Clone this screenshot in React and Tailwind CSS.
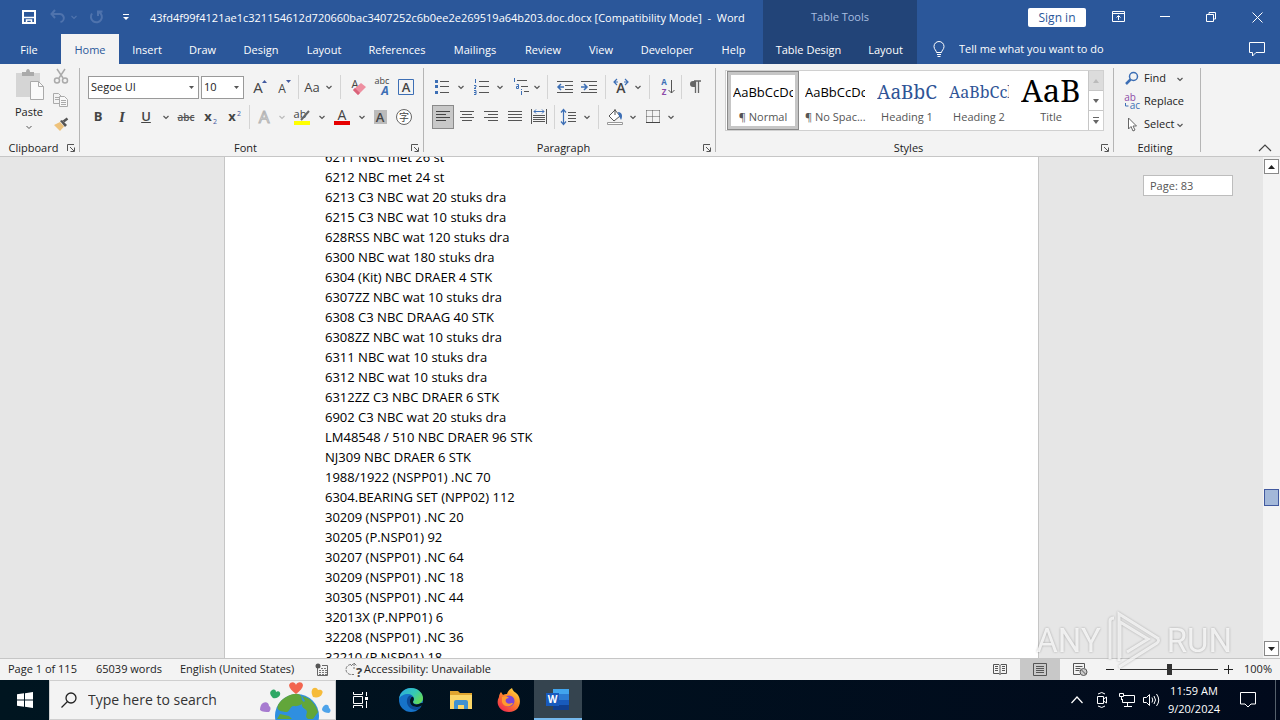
import React from "react";

const Svg = ({ w = 20, h = 20, children, className = "" }) => (
  <svg width={w} height={h} viewBox={`0 0 ${w} ${h}`} fill="none" aria-hidden="true" className={`shrink-0 overflow-visible ${className}`}>
    {children}
  </svg>
);

const IconButton = ({ label, width = "w-6", className = "", children }) => (
  <button type="button" aria-label={label} className={`flex h-6 shrink-0 items-center justify-center ${width} ${className}`}>
    {children}
  </button>
);

const Chevron = ({ label, width = "w-3", color = "#555" }) => (
  <IconButton label={label} width={width}>
    <Svg w={8} h={8}><path d="M1.500 3 4 5.500 6.500 3" stroke={color} strokeWidth="1.200" /></Svg>
  </IconButton>
);

const Sep = ({ width = "w-2" }) => (
  <span className={`flex h-6 shrink-0 justify-center ${width}`}><span className="h-full w-px bg-[#d4d4d4]" /></span>
);

const Lines = ({ rows, color = "#555" }) => (
  <>{rows.map(([x1, x2, y]) => <path key={y} d={`M${x1} ${y}.5H${x2}`} stroke={color} />)}</>
);

const Group = ({ name, width, launcher = true, children }) => (
  <section aria-label={name} className={`flex shrink-0 flex-col ${width}`}>
    <div className="flex flex-1">
      <div className="flex min-w-0 flex-1 flex-col">
        <div className="flex-1">{children}</div>
        <div className="flex h-4 items-center pr-1">
          <span className="flex-1 text-center">{name}</span>
          {launcher && (
            <button type="button" aria-label={`${name} settings`}>
              <Svg w={8} h={8}>
                <path d="M.5 7V.5H7M3 3l4 4M7.500 3.500v4h-4" stroke="#555" />
              </Svg>
            </button>
          )}
        </div>
      </div>
      <span className="mt-1 mb-1 w-px bg-[#b5b5b5]" />
    </div>
  </section>
);

const TABS = [
  ["File", "w-[58px] mr-[3px]"], ["Home", "w-[58px]"], ["Insert", "w-14"], ["Draw", "w-[55px]"], ["Design", "w-[62px]"],
  ["Layout", "w-16"], ["References", "w-[82px]"], ["Mailings", "w-[74px]"], ["Review", "w-[62px]"],
  ["View", "w-[54px]"], ["Developer", "w-[78px]"], ["Help", "w-[55px]"],
];

const Header = () => (
  <header className="flex h-16 shrink-0 bg-[#2b579a] text-[11px] text-white">
    <div className="flex w-[763px] shrink-0 flex-col">
      <div className="flex h-[34px] items-center">
        <button type="button" aria-label="Save" className="ml-[22px]">
          <Svg w={14} h={14}><path d="M1 1h12v12H1z" stroke="#fff" strokeWidth="2" /><path d="M2 7.500h10M4.500 13v-3h5v3" stroke="#fff" strokeWidth="1.500" /></Svg>
        </button>
        <button type="button" aria-label="Undo" className="ml-[14px]">
          <Svg w={16} h={16}><path d="M5 1 1.500 5 5 9M2 5h7a4 4 0 0 1 1.500 8" stroke="#4f73ad" strokeWidth="2" /></Svg>
        </button>
        <Chevron label="Undo history" width="w-4" color="#4f73ad" />
        <button type="button" aria-label="Repeat" className="ml-1.5">
          <Svg w={16} h={16}><path d="M4 4.500A5.500 5.500 0 1 0 11 3M10 7V2.500h4.500" stroke="#4f73ad" strokeWidth="2" /></Svg>
        </button>
        <button type="button" aria-label="Customize Quick Access Toolbar" className="ml-[18px]">
          <Svg w={8} h={8}><path d="M1 1.500h6" stroke="#fff" /><path d="M1 4h6L4 7z" fill="#fff" /></Svg>
        </button>
        <h1 className="ml-5 pt-0.5 whitespace-pre">43fd4f99f4121ae1c321154612d720660bac3407252c6b0ee2e269519a64b203.doc.docx [Compatibility Mode]  -  Word</h1>
      </div>
      <nav aria-label="Ribbon tabs" className="flex h-[30px]">
        {TABS.map(([t, w]) => (
          <button key={t} type="button" className={`pt-0.5 text-center ${w} ${t === "Home" ? "bg-[#f3f3f3] text-[#2b579a]" : ""}`}>{t}</button>
        ))}
      </nav>
    </div>
    <div className="flex w-[154px] shrink-0 flex-col bg-[#224478]">
      <div className="flex h-[34px] items-center justify-center text-[#a9bfe0]">Table Tools</div>
      <div className="flex h-[30px]">
        <button type="button" className="w-[91px] pt-0.5">Table Design</button>
        <button type="button" className="flex-1 pt-0.5">Layout</button>
      </div>
    </div>
    <div className="flex flex-1 flex-col">
      <div className="flex h-[34px] items-center justify-end pr-[17px]">
        <button type="button" className="mr-[26px] h-[19px] w-[58px] rounded-xs bg-white text-xs leading-[19px] text-[#2b579a]">Sign in</button>
        <button type="button" aria-label="Ribbon display options" className="mr-[34px]">
          <Svg w={14} h={12}><path d="M.5.5h12v10H.5zM.5 2.500h12M6.500 9V5M4.500 6.500l2-2 2 2" stroke="#fff" /></Svg>
        </button>
        <button type="button" aria-label="Minimize" className="mr-9"><Svg w={10} h={10}><path d="M0 4.500h10" stroke="#fff" /></Svg></button>
        <button type="button" aria-label="Restore" className="mr-9"><Svg w={10} h={10}><path d="M.5 2.500h7v7h-7zM3 2V.5h6.500V7H8" stroke="#fff" /></Svg></button>
        <button type="button" aria-label="Close"><Svg w={11} h={11}><path d="m.5.5 10 10M10.500.5l-10 10" stroke="#fff" /></Svg></button>
      </div>
      <div className="flex h-[30px] items-center pr-[15px]">
        <label htmlFor="tellme" className="ml-4" aria-label="Tell me">
          <Svg w={12} h={16}><path d="M3.500 11.500c0-2-2.500-3-2.500-6a5 5 0 0 1 10 0c0 3-2.500 4-2.500 6zM4 13.500h4M4.500 15.500h3" stroke="#fff" /></Svg>
        </label>
        <input id="tellme" placeholder="Tell me what you want to do" className="ml-3.5 min-w-0 flex-1 bg-transparent outline-none placeholder:text-white" />
        <button type="button" aria-label="Comments"><Svg w={16} h={15}><path d="M.5.5h15v10H7L3.500 14v-3.500h-3z" stroke="#fff" /></Svg></button>
      </div>
    </div>
  </header>
);

const Combo = ({ label, value, width }) => (
  <div className={`relative h-[23px] border border-[#999] bg-white ${width}`}>
    <select aria-label={label} className="h-full w-full appearance-none bg-transparent pl-0.5 text-[11px] text-[#222] outline-none"><option>{value}</option></select>
    <Svg w={5} h={3} className="pointer-events-none absolute top-[9px] right-1"><path d="M0 0h5L2.500 3z" fill="#555" /></Svg>
  </div>
);

const Glyph = ({ x = 10, y = 15, size = 14, fill = "#444", weight = 400, anchor = "middle", italic, children }) => (
  <text x={x} y={y} fontSize={size} fill={fill} fontWeight={weight} textAnchor={anchor} fontStyle={italic ? "italic" : "normal"} fontFamily="'Open Sans', 'Noto Sans CJK SC', sans-serif">{children}</text>
);

const Clipboard = () => (
  <Group name="Clipboard" width="w-20">
    <div className="flex pt-1">
      <button type="button" className="ml-2 flex w-[42px] flex-col items-center">
        <Svg w={30} h={32}>
          <path d="M2 5h24v24H2z" fill="#d5d5d5" /><path d="M8 8V4h4c0-4 4-4 4 0h4v4z" fill="#aaa" />
          <path d="M16.500 13.500h8l5 5v13h-13z" fill="#fafafa" stroke="#aaa" /><path d="M24.500 13.500v5h5" stroke="#aaa" />
        </Svg>
        <span className="mt-1 leading-4">Paste</span>
        <Svg w={8} h={8} className="mt-1"><path d="M1.500 2 4 4.500 6.500 2" stroke="#555" /></Svg>
      </button>
      <div className="flex w-[22px] flex-col items-center">
        <IconButton label="Cut" className="-mt-1"><Svg w={16} h={16}><path d="m4 1 6 9M12 1 6 10" stroke="#aaa" strokeWidth="1.500" /><circle cx="4" cy="12.500" r="2.500" stroke="#aaa" strokeWidth="1.500" /><circle cx="12" cy="12.500" r="2.500" stroke="#aaa" strokeWidth="1.500" /></Svg></IconButton>
        <IconButton label="Copy"><Svg w={16} h={14}><path d="M.5.5h5l3 3v7h-8zM2 4.500h4M2 6.500h4" stroke="#aaa" /><path d="M6.500 3.500h5l3 3v7h-8z" fill="#f8f8f8" stroke="#aaa" /><path d="M8 7.500h5M8 9.500h5M8 11.500h5" stroke="#aaa" /></Svg></IconButton>
        <IconButton label="Format painter"><Svg w={16} h={15}><path d="M1 8 7 5l4 4.500L7 14z" fill="#eec27b" /><path d="m7 4 2-1 5 5-2 2z" fill="#555" /><path d="m10.500 4.500 4-3" stroke="#555" strokeWidth="2.500" /></Svg></IconButton>
      </div>
    </div>
  </Group>
);

const FontGroup = () => (
  <Group name="Font" width="w-[344px]">
    <div className="flex flex-col gap-[6px] pt-[11px]">
      <div className="flex h-6 items-center pl-2">
        <Combo label="Font name" value="Segoe UI" width="w-[111px]" />
        <span className="w-0.5" />
        <Combo label="Font size" value="10" width="w-[43px]" />
        <span className="w-1" />
        <IconButton label="Increase font size"><Svg><Glyph x={8} y={16} size={15}>A</Glyph><path d="m12 6 2.500-3L17 6z" fill="#41599f" /></Svg></IconButton>
        <IconButton label="Decrease font size"><Svg><Glyph x={8} y={16} size={12}>A</Glyph><path d="m12 3 2.500 3L17 3z" fill="#41599f" /></Svg></IconButton>
        <Sep width="w-1" />
        <IconButton label="Change case"><Svg><Glyph size={13}>Aa</Glyph></Svg></IconButton>
        <Chevron label="Case options" width="w-2.5" />
        <Sep width="w-3" />
        <IconButton label="Clear formatting"><Svg><Glyph x={7} y={11} size={11}>A</Glyph><path d="m5 13 8-7 5 4-8 8z" fill="#ee8fa0" /><path d="m5 13 2-2 5 5-2 2z" fill="#d9637a" /></Svg></IconButton>
        <IconButton label="Phonetic guide"><Svg><Glyph y={7} size={9}>abc</Glyph><Glyph x={13} y={18} size={12} fill="#3d6fb5" weight={700} italic>A</Glyph></Svg></IconButton>
        <IconButton label="Character border"><Svg><path d="M2.500 2.500h15v15h-15z" stroke="#3d6fb5" /><Glyph size={13} weight={600}>A</Glyph></Svg></IconButton>
      </div>
      <div className="flex h-6 items-center pl-1.5">
        <IconButton label="Bold"><b className="text-[13px] text-[#444]">B</b></IconButton>
        <IconButton label="Italic"><i className="font-['Liberation_Serif'] text-[15px] font-bold text-[#444]">I</i></IconButton>
        <IconButton label="Underline"><u className="text-[13px] font-semibold text-[#444]">U</u></IconButton>
        <Chevron label="Underline options" width="w-4" />
        <IconButton label="Strikethrough"><s className="text-[10px] font-semibold text-[#555]">abc</s></IconButton>
        <IconButton label="Subscript"><Svg><Glyph x={8} y={14} weight={700} size={13}>x</Glyph><Glyph x={15} y={17} size={7} fill="#41599f">2</Glyph></Svg></IconButton>
        <IconButton label="Superscript"><Svg><Glyph x={8} y={14} weight={700} size={13}>x</Glyph><Glyph x={15} y={9} size={7} fill="#41599f">2</Glyph></Svg></IconButton>
        <Sep width="w-1.5" />
        <IconButton label="Text effects"><Svg><text x="10" y="16" textAnchor="middle" fontSize="17" fontFamily="Open Sans" fill="#f3f3f3" stroke="#b5b5b5">A</text></Svg></IconButton>
        <Chevron label="Text effect options" color="#bbb" />
        <IconButton label="Highlight" width="w-7"><Svg><Glyph x={8} y={11} size={11}>ab</Glyph><path d="m9 13 8-9" stroke="#666" strokeWidth="2" /><path d="M2 14h16v4H2z" fill="#ffff00" /></Svg></IconButton>
        <Chevron label="Highlight options" />
        <IconButton label="Font color" width="w-7"><Svg><Glyph y={13} size={14}>A</Glyph><path d="M2 14h16v4H2z" fill="#e60000" /></Svg></IconButton>
        <Chevron label="Font color options" />
        <IconButton label="Character shading"><Svg><path d="M4 3h13v14H4z" fill="#bbb" /><Glyph size={13} weight={600}>A</Glyph></Svg></IconButton>
        <IconButton label="Enclose characters"><Svg><circle cx="10" cy="10" r="7.500" fill="#fff" stroke="#666" /><Glyph y={14} size={10}>字</Glyph></Svg></IconButton>
      </div>
    </div>
  </Group>
);

const ParagraphGroup = () => (
  <Group name="Paragraph" width="w-[292px]">
    <div className="flex flex-col gap-[6px] pt-[11px]">
      <div className="flex h-6 items-center pl-[7px]">
        <IconButton label="Bullets"><Svg><Lines rows={[[7, 16, 4], [7, 16, 9], [7, 16, 15]]} /><path d="M2 3h3v3H2zM2 8h3v3H2zM2 14h3v3H2z" fill="#3d6fb5" /></Svg></IconButton>
        <Chevron label="Bullet options" />
        <span className="w-[3px]" />
        <IconButton label="Numbering"><Svg><Lines rows={[[7, 17, 4], [7, 17, 9], [7, 17, 15]]} /><path d="M3.500 2v4M2 8.500h2v1.500l-2 1.500h2M2 13.500h2v4H2m0-2h2" stroke="#3d6fb5" /></Svg></IconButton>
        <Chevron label="Numbering options" />
        <span className="w-[3px]" />
        <IconButton label="Multilevel list"><Svg><Lines rows={[[6, 16, 3], [10, 17, 9], [13, 18, 14]]} /><path d="M3.500 1v4M5.500 7.500h2v4h-2v-2h2M10.500 12v1M10.500 14v4" stroke="#3d6fb5" /></Svg></IconButton>
        <Chevron label="Multilevel options" width="w-2" />
        <Sep width="w-3" />
        <IconButton label="Decrease indent"><Svg><Lines rows={[[2, 18, 4], [10, 18, 8], [10, 18, 12], [2, 18, 15]]} /><path d="M9 10H3m3-3-3 3 3 3" stroke="#3d6fb5" strokeWidth="1.500" /></Svg></IconButton>
        <IconButton label="Increase indent"><Svg><Lines rows={[[2, 18, 4], [10, 18, 8], [10, 18, 12], [2, 18, 15]]} /><path d="M2 10h6M5 7l3 3-3 3" stroke="#3d6fb5" strokeWidth="1.500" /></Svg></IconButton>
        <Sep />
        <IconButton label="Asian layout"><Svg><Glyph y={16} size={14} weight={600}>A</Glyph><path d="m6 2-3 3 3 3M3 5h4M14 2l3 3-3 3M17 5h-4" stroke="#3d6fb5" strokeWidth="1.200" /></Svg></IconButton>
        <Chevron label="Asian layout options" width="w-2.5" />
        <Sep width="w-3" />
        <IconButton label="Sort"><Svg><Glyph x={7} y={8} size={8} fill="#3d6fb5" weight={700}>A</Glyph><Glyph x={7} y={18} size={8} fill="#8d4ba8" weight={700}>Z</Glyph><path d="M14.500 3v13m-3-3 3 3 3-3" stroke="#555" /></Svg></IconButton>
        <Sep width="w-1" />
        <IconButton label="Show marks"><Svg><path d="M10 4H8a3 3 0 0 0 0 6h2z" fill="#666" /><path d="M9 4h7M10.500 4v12M13.500 4v12" stroke="#666" strokeWidth="1.300" /></Svg></IconButton>
      </div>
      <div className="flex h-6 items-center pl-2">
        <IconButton label="Align left" width="w-[22px] mr-px" className="border border-[#8a8a8a] bg-[#c8c8c8]"><Svg><Lines rows={[[3, 17, 4], [3, 13, 7], [3, 17, 10], [3, 13, 13]]} color="#444" /></Svg></IconButton>
        <IconButton label="Center"><Svg><Lines rows={[[3, 17, 4], [5, 15, 7], [3, 17, 10], [5, 15, 13]]} /></Svg></IconButton>
        <IconButton label="Align right"><Svg><Lines rows={[[3, 17, 4], [7, 17, 7], [3, 17, 10], [7, 17, 13]]} /></Svg></IconButton>
        <IconButton label="Justify"><Svg><Lines rows={[[3, 17, 4], [3, 17, 7], [3, 17, 10], [3, 17, 13]]} /></Svg></IconButton>
        <IconButton label="Distributed"><Svg><path d="M2.500 2v15M17.500 2v15M4 8.500h12M4 10.500h12M4 12.500h12M4 14.500h12" stroke="#555" /><path d="M5 4.500h10M7 2.500l-2 2 2 2M13 2.500l2 2-2 2" stroke="#3d6fb5" /></Svg></IconButton>
        <Sep width="w-1.5" />
        <IconButton label="Line spacing"><Svg><Lines rows={[[9, 17, 5], [9, 17, 8], [9, 17, 11], [9, 17, 14]]} /><path d="M4.500 3v14M2 5.500l2.500-3 2.500 3M2 14.500l2.500 3 2.500-3" stroke="#3d6fb5" strokeWidth="1.200" /></Svg></IconButton>
        <Chevron label="Spacing options" />
        <Sep width="w-2.5" />
        <IconButton label="Shading"><Svg><path d="m4 9 6-6 5 6-6 5z" fill="#fff" stroke="#555" /><path d="M10 2v6" stroke="#555" /><path d="M13 5c4 0 5 4 3 8l-2-4z" fill="#3d6fb5" /><path d="M2.500 15.500h15v2h-15z" fill="#fff" stroke="#999" /></Svg></IconButton>
        <Chevron label="Shading options" />
        <span className="w-0.5" />
        <IconButton label="Borders"><Svg><path d="M3.500 3.500h13M3.500 9.500h13M3.500 3.500v12M9.500 3.500v12M16.500 3.500v12" stroke="#555" strokeDasharray="1 1" /><path d="M3 15.500h14" stroke="#444" /></Svg></IconButton>
        <Chevron label="Border options" />
      </div>
    </div>
  </Group>
);

const STYLES = [
  ["¶ Normal", "AaBbCcDc", "pt-1 text-[13px] text-black"],
  ["¶ No Spac...", "AaBbCcDc", "pt-1 text-[13px] text-black"],
  ["Heading 1", "AaBbC", "pt-1 text-[19px] font-['Noto_Serif','DejaVu_Serif','Liberation_Serif',serif] text-[#2f5496]"],
  ["Heading 2", "AaBbCcl", "pt-1 text-base font-['Noto_Serif','Liberation_Serif',serif] text-[#2f5496]"],
  ["Title", "AaB", "text-[31px] font-['Noto_Serif','Liberation_Serif',serif] text-black"],
];

const StylesGroup = () => (
  <Group name="Styles" width="w-[398px]">
    <div className="ml-[9px] mt-1.5 flex h-[61px] w-[379px] border border-[#d0d0d0] bg-white">
      <div className="flex flex-1 pl-px">
        {STYLES.map(([name, sample, cls], i) => (
          <button key={name} type="button" className={`flex h-full w-[72px] flex-col overflow-hidden px-1.5 ${i === 0 ? "outline-1 -outline-offset-1 outline-[#8a8a8a] inset-ring-4 inset-ring-[#c6c6c6]" : ""}`}>
            <span className={`flex h-[38px] w-full items-center justify-start overflow-hidden leading-none whitespace-nowrap ${cls}`}>{sample}</span>
            <span className="w-full text-center leading-4 whitespace-nowrap text-[#555]">{name}</span>
          </button>
        ))}
      </div>
      <div className="flex w-[15px] flex-col divide-y divide-[#c6c6c6] border-l border-[#c6c6c6]">
        <button type="button" aria-label="Previous styles" className="flex flex-1 items-center justify-center bg-[#dcdcdc]"><Svg w={6} h={4}><path d="M0 4h6L3 0z" fill="#bbb" /></Svg></button>
        <button type="button" aria-label="Next styles" className="flex flex-1 items-center justify-center"><Svg w={6} h={4}><path d="M0 0h6L3 4z" fill="#666" /></Svg></button>
        <button type="button" aria-label="More styles" className="flex flex-1 items-center justify-center"><Svg w={6} h={7}><path d="M0 .5h6" stroke="#666" /><path d="M0 3h6L3 7z" fill="#666" /></Svg></button>
      </div>
    </div>
  </Group>
);

const EditingGroup = () => (
  <Group name="Editing" width="w-[87px]" launcher={false}>
    <div className="flex flex-col pt-[3px] pl-2.5">
      <div className="flex h-[23px] items-center">
        <button type="button" className="flex items-center gap-1"><Svg w={16} h={16}><circle cx="9.500" cy="5.500" r="4" stroke="#3d6fb5" strokeWidth="1.500" /><path d="m6.500 8.500-4.500 4.500" stroke="#3d6fb5" strokeWidth="2.500" /></Svg>Find</button>
        <span className="w-2" /><Chevron label="Find options" />
      </div>
      <button type="button" className="flex h-[23px] items-center gap-1"><Svg w={16} h={18}><Glyph x={6} y={8} size={10} fill="#8d4ba8">ab</Glyph><Glyph x={11} y={16} size={10} fill="#3d6fb5">ac</Glyph><path d="M1.500 10v3h3" stroke="#3d6fb5" /></Svg>Replace</button>
      <div className="flex h-[23px] items-center">
        <button type="button" className="flex items-center gap-1"><Svg w={16} h={16}><path d="M4.500 1v11l2.500-2.500 2 4.500 2-1-2-4h3.500z" fill="#fff" stroke="#666" /></Svg>Select</button>
        <Chevron label="Select options" />
      </div>
    </div>
  </Group>
);

const ROWS = [
  "6211 NBC met 26 st", "6212 NBC met 24 st", "6213 C3 NBC wat 20 stuks dra", "6215 C3 NBC wat 10 stuks dra",
  "628RSS NBC wat 120 stuks dra", "6300 NBC wat 180 stuks dra", "6304 (Kit) NBC DRAER 4 STK", "6307ZZ NBC wat 10 stuks dra",
  "6308 C3 NBC DRAAG 40 STK", "6308ZZ NBC wat 10 stuks dra", "6311 NBC wat 10 stuks dra", "6312 NBC wat 10 stuks dra",
  "6312ZZ C3 NBC DRAER 6 STK", "6902 C3 NBC wat 20 stuks dra", "LM48548 / 510 NBC DRAER 96 STK", "NJ309 NBC DRAER 6 STK",
  "1988/1922 (NSPP01) .NC 70", "6304.BEARING SET (NPP02) 112", "30209 (NSPP01) .NC 20", "30205 (P.NSP01) 92",
  "30207 (NSPP01) .NC 64", "30209 (NSPP01) .NC 18", "30305 (NSPP01) .NC 44", "32013X (P.NPP01) 6",
  "32208 (NSPP01) .NC 36", "32210 (P.NSP01) 18",
];

const Watermark = () => (
  <div className="pointer-events-none absolute right-12 -bottom-3 flex h-[60px] items-center gap-1.5 font-[Roboto,sans-serif] text-[33px] leading-none text-white/80 [filter:drop-shadow(0_0_1px_rgb(0_0_0/0.35))]">
    <span>ANY</span>
    <Svg w={54} h={60}>
      <path d="M3 49V11q0-3 4-3M12 51V4l40 25M12 57l38-24q3-3 0-5M13 48V12l28 17L20 42" stroke="#fff" strokeOpacity=".75" strokeWidth="3" />
    </Svg>
    <span>RUN</span>
  </div>
);

const Workspace = () => (
  <main className="relative flex min-h-0 flex-1 bg-[#e6e6e6]">
    <div className="flex min-w-0 flex-1 justify-center overflow-hidden">
      <article className="w-[815px] border-x border-[#c6c6c6] bg-white pl-[100px]">
        <ul className="-mt-2.5 text-[13px] leading-5 text-black">
          {ROWS.map((r) => <li key={r}>{r}</li>)}
        </ul>
      </article>
    </div>
    <div className="flex w-[17px] shrink-0 flex-col items-center bg-[#f3f3f3] py-0.5">
      <button type="button" aria-label="Scroll up" className="flex size-[15px] items-center justify-center border border-[#888] bg-white"><Svg w={7} h={4}><path d="M0 4h7L3.500 0z" fill="#222" /></Svg></button>
      <div className="flex-[316]" />
      <div className="h-[17px] w-[15px] border border-[#41599f] bg-[#a3b8d9]" />
      <div className="flex-[135]" />
      <button type="button" aria-label="Scroll down" className="flex size-[15px] items-center justify-center border border-[#888] bg-white"><Svg w={7} h={4}><path d="M0 0h7L3.500 4z" fill="#222" /></Svg></button>
    </div>
    <div className="absolute top-[18px] right-[47px] h-[21px] w-[90px] border border-[#bdbdbd] bg-white pl-1.5 leading-5 text-[#555]">Page: 83</div>
    <Watermark />
  </main>
);

const StatusBar = () => (
  <footer className="flex h-[22px] shrink-0 items-center border-t border-[#c6c6c6] bg-[#f3f3f3] pl-2">
    <span className="w-[88px]">Page 1 of 115</span>
    <span className="w-[84px]">65039 words</span>
    <span className="w-[135px]">English (United States)</span>
    <button type="button" aria-label="Macro recording"><Svg w={14} h={14}><path d="M2.500 4v8.500h10v-10H7" stroke="#666" /><circle cx="3" cy="3" r="2.500" fill="#555" /><path d="M6 5.500h6M4 7.500h8M4 9.500h8M4 11.500h8" stroke="#777" strokeDasharray="2 1" /></Svg></button>
    <button type="button" className="ml-[17px] flex items-center"><Svg w={18} h={16}><path d="M5 2.500a5 5 0 0 0 0 10h3M8 1v6M5 4l3-3 3 3" stroke="#777" strokeDasharray="3 1" /><Glyph x={13} y={15} size={13} weight={700}>?</Glyph></Svg>Accessibility: Unavailable</button>
    <span className="flex-1" />
    <button type="button" aria-label="Read mode" className="flex h-full w-10 items-center justify-center"><Svg w={14} h={13}><path d="M7 2.500 6 1.500H.5v9H6l1 1 1-1h5.500v-9H8zM7 2.500v9M2 3.500h3M2 5.500h3M2 7.500h3M9 3.500h3M9 5.500h3M9 7.500h3" stroke="#555" /></Svg></button>
    <button type="button" aria-label="Print layout" className="flex h-full w-10 items-center justify-center bg-[#c8c8c8]"><Svg w={14} h={13}><path d="M.5.5h13v12H.5zM3 3.500h8M3 5.500h8M3 7.500h8M3 9.500h8" stroke="#555" /></Svg></button>
    <button type="button" aria-label="Web layout" className="flex h-full w-10 items-center justify-center"><Svg w={15} h={13}><path d="M7 11.500H.5V.5h11V5M2.500 3.500h7M2.500 5.500h5M2.500 7.500h4" stroke="#555" /><circle cx="10.500" cy="9" r="3.500" fill="#ccc" stroke="#555" /><path d="m8.500 7 4 4" stroke="#555" /></Svg></button>
    <button type="button" aria-label="Zoom out" className="ml-[6px]"><Svg w={8} h={9}><path d="M0 4.500h8" stroke="#222" /></Svg></button>
    <input type="range" aria-label="Zoom" min="0" max="100" defaultValue="50" className="mx-1.5 h-3 w-[98px] appearance-none bg-[linear-gradient(#333,#333)] bg-[length:100%_1px] bg-center bg-no-repeat [&::-webkit-slider-thumb]:h-[11px] [&::-webkit-slider-thumb]:w-[5px] [&::-webkit-slider-thumb]:appearance-none [&::-webkit-slider-thumb]:bg-[#333]" />
    <button type="button" aria-label="Zoom in"><Svg w={9} h={9}><path d="M0 4.500h9M4.500 0v9" stroke="#222" /></Svg></button>
    <button type="button" className="w-[47px] pr-2 text-right">100%</button>
  </footer>
);

const EarthArt = () => (
  <Svg w={74} h={38} className="mr-[3px] overflow-hidden">
    <circle cx="39" cy="35" r="22" fill="#2f8fe0" />
    <path d="M20 24c5-8 14-12 20-11 6 2 2 5 5 7s-5 6-9 5-4 7-9 6-9-2-7-7zM44 15c9 2 14 9 16 16l-5 7h-5c-5-3 2-7-3-10s-3-6 0-8zM22 33l9 2 3 3H19z" fill="#62a63a" />
    <path d="M31 4c2-4 6-3 7 0 1-3 6-4 7 0 0 3-3 6-7 9-4-3-7-6-7-9z" fill="#f2654f" />
    <path d="M54 9c1-3 5-3 6 0 3-1 6 1 4 4-1 3-5 4-9 3-1-2-2-5-1-7z" fill="#f6bb3a" />
    <path d="M13 10c3-3 5-1 5 1 3-2 5 1 4 3s-4 4-7 3c-2-2-4-5-2-7z" fill="#2fa866" />
    <path d="M5 22c3-2 6 0 6 3 2 1 2 4 0 6-3 0-7 0-9-2 0-3 1-6 3-7z" fill="#a77bd0" />
    <path d="M67 24c2-1 4 0 4 3 2 1 2 4 0 5-3 0-6-1-7-3 0-2 1-4 3-5z" fill="#4da3ea" />
  </Svg>
);

const TaskButton = ({ label, active, width = "w-[49px]", children }) => (
  <button type="button" aria-label={label} className={`flex h-full items-center justify-center ${width} ${active ? "border-b-2 border-[#76b9ed] bg-[#35444f]" : ""}`}>{children}</button>
);

const Taskbar = () => (
  <nav aria-label="Taskbar" className="flex h-10 shrink-0 items-center bg-linear-to-r from-[#001520] to-[#010a1c] text-white">
    <TaskButton label="Start"><Svg w={16} h={16}><path d="M0 2.300 7 1.300v6.200H0zM8 1.200 16 0v7.500H8zM0 8.500h7v6.200l-7-1zM8 8.500h8V16l-8-1.200z" fill="#fff" /></Svg></TaskButton>
    <div className="flex h-full w-[287px] items-center border border-[#cfcfcf] bg-[#f3f3f3] pl-[11px]">
      <label htmlFor="search" aria-label="Search"><Svg w={16} h={16}><circle cx="10" cy="6" r="5" stroke="#222" strokeWidth="1.300" /><path d="m6.500 9.500-6 6" stroke="#222" strokeWidth="1.300" /></Svg></label>
      <input id="search" placeholder="Type here to search" className="ml-[11px] min-w-0 flex-1 bg-transparent text-sm outline-none placeholder:text-[#333]" />
      <EarthArt />
    </div>
    <TaskButton label="Task view"><Svg w={18} h={16}><path d="M1.500 0v2.500h9V0M1.500 4.500h9v7h-9zM1.500 16v-2.500h9V16M14.500 0v4M14.500 9v7" stroke="#fff" /><path d="M13 5h3v3h-3z" fill="#fff" /></Svg></TaskButton>
    <TaskButton label="Edge" width="w-[52px]">
      <Svg w={24} h={24}>
        <defs><linearGradient id="eg" x1="0" y1="0" x2="1" y2=".6"><stop stopColor="#2aa5e8" /><stop offset=".6" stopColor="#35c9b5" /><stop offset="1" stopColor="#62d95c" /></linearGradient></defs>
        <circle cx="12" cy="12" r="12" fill="#1673c9" />
        <path d="M0 11C1 4 6 0 12 0c7 0 12 5 12 10 0 4-3 6-6 6-3 0-4-1-4-2 0-1 1-1 1-3 0-3-3-5-6-5-4 0-8 2-9 5z" fill="url(#eg)" />
        <path d="M9 9c-3 5 0 12 7 13 3 0 5-2 6-4-5 3-12 0-11-6 0-2 1-3 2-4-2-1-3 0-4 1z" fill="#0c4a97" />
        <path d="M11 13c0-3 2-5 3-4 2 2 0 4 0 5 0 3 5 3 8 1l2 0v2l-2 1c-4 2-11 1-11-5z" fill="#001520" />
      </Svg>
    </TaskButton>
    <TaskButton label="File Explorer" width="w-[47px]"><Svg w={22} h={20}><path d="M0 1h8l2 2h12v4H0z" fill="#e0a52f" /><path d="M0 5h22v14H0z" fill="#fbd667" /><path d="M4 19v-7q0-2 2-2h10q2 0 2 2v7h-4v-4H8v4z" fill="#3f91d0" /></Svg></TaskButton>
    <TaskButton label="Firefox" width="w-[50px]">
      <Svg w={24} h={24}>
        <defs><linearGradient id="fx" x1=".9" y1="0" x2=".2" y2="1"><stop stopColor="#ffe443" /><stop offset=".45" stopColor="#ff8a2a" /><stop offset="1" stopColor="#f0264f" /></linearGradient></defs>
        <path d="M4 4l2 3c1-1 3-1 4-1 1-3 3-5 5-6 1 4 4 4 6 7 4 6 2 17-9 17C3 24-2 16 2 9c0-2 1-4 2-5z" fill="url(#fx)" />
        <circle cx="12" cy="13" r="5.500" fill="#7a45d8" /><path d="M5 9c3-1 5-1 7 1-3 0-4 2-3 4 2 3 5 1 7 1-2 5-10 4-11-1z" fill="#ff9b2e" />
      </Svg>
    </TaskButton>
    <TaskButton label="Word" active width="w-12">
      <Svg w={24} h={21}><path d="M7 0h16v5H7z" fill="#41a5ee" /><path d="M7 5h16v6H7z" fill="#2b7cd3" /><path d="M7 11h16v5H7z" fill="#185abd" /><path d="M7 16h16v5H7z" fill="#103f91" /><path d="M0 4h13v13H0z" fill="#185abd" /><Glyph x={6.500} y={14} size={10} fill="#fff" weight={700}>W</Glyph></Svg>
    </TaskButton>
    <span className="flex-1" />
    <TaskButton label="Hidden icons" width="w-6"><Svg w={12} h={8}><path d="m.5 7 5.500-6 5.500 6" stroke="#fff" strokeWidth="1.200" /></Svg></TaskButton>
    <TaskButton label="Meet Now" width="w-[26px]"><Svg w={12} h={16}><path d="M1.500 4.500h6v7h-6zM7.500 7l3-2v6l-3-2M2 2q4-3 7 0M2 14q4 3 7 0" stroke="#fff" /></Svg></TaskButton>
    <TaskButton label="Network" width="w-6"><Svg w={16} h={14}><path d="M5 2.500h10.500v7H3.500V6M8.500 10v3M5 13.500h8M.5.5h4v3h-4zM2.500 4v3" stroke="#fff" /></Svg></TaskButton>
    <TaskButton label="Volume" width="w-6"><Svg w={17} h={14}><path d="M.5 4.500h3l3-3v11l-3-3h-3zM9 4.500q1.500 2.500 0 5M11 3q3 4 0 8M13.500 1q4.500 6 0 12" stroke="#fff" /></Svg></TaskButton>
    <button type="button" className="flex w-[62px] flex-col items-center text-[11px] leading-[18px] whitespace-nowrap"><span>11:59 AM</span><span>9/20/2024</span></button>
    <TaskButton label="Notifications" width="w-[46px]"><Svg w={16} h={16}><path d="M.5.5h15v11.500H11l-3 3-3-3H.5z" stroke="#fff" /></Svg></TaskButton>
    <button type="button" aria-label="Show desktop" className="ml-1 h-full w-[5px] border-l border-[#55606b]" />
  </nav>
);

export default function App() {
  return (
    <div className="flex h-screen flex-col overflow-hidden font-['Open_Sans','Noto_Sans',sans-serif] text-[11px] text-[#222]">
      <Header />
      <div className="flex h-[93px] shrink-0 border-b border-[#c6c6c6] bg-[#f3f3f3]">
        <Clipboard />
        <FontGroup />
        <ParagraphGroup />
        <StylesGroup />
        <EditingGroup />
        <div className="flex flex-1 items-end justify-end pr-2 pb-1">
          <button type="button" aria-label="Collapse ribbon"><Svg w={14} h={8}><path d="m1 7 6-6 6 6" stroke="#444" strokeWidth="1.200" /></Svg></button>
        </div>
      </div>
      <Workspace />
      <StatusBar />
      <Taskbar />
    </div>
  );
}
